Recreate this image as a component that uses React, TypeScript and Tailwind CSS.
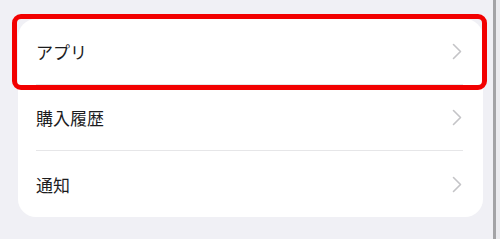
import React from "react";

function Chevron() {
  return (
    <svg width="10" height="17" viewBox="0 0 10 17" fill="none" className="shrink-0">
      <polyline points="1.5,1.5 8.5,8.5 1.5,15.5" stroke="#c4c4c7" strokeWidth="1.6" strokeLinecap="round" strokeLinejoin="round" />
    </svg>
  );
}

function Row({ label, last }: { label: string; last?: boolean }) {
  return (
    <div className="h-[66px] pl-[18px] flex flex-col">
      <div className="flex-1 flex items-center pr-[21px]">
        <span className="flex-1 text-[17px] text-[#1c1c1e] leading-none">{label}</span>
        <Chevron />
      </div>
      {!last && <div className="h-px bg-[#e6e6e8] mr-[20px]" />}
    </div>
  );
}

export default function App() {
  return (
    <div
      className="relative w-[500px] h-[239px] flex bg-[#f0f0f5] overflow-hidden"
      style={{ fontFamily: '"Noto Sans CJK JP", "Noto Sans", sans-serif' }}
    >
      <div className="flex-1 pl-[18px] pr-[10px] pt-[19px]">
        <div className="bg-white rounded-[18px] flex flex-col">
          <Row label="アプリ" />
          <Row label="購入履歴" />
          <Row label="通知" last />
        </div>
      </div>
      <div className="w-[3px] bg-[#a3a3a6]" />
      <div className="w-[4px] bg-[#ebebef]" />
      <div className="absolute left-[12px] top-[14px] w-[475px] h-[76px] border-[5px] border-[#f20000] rounded-[9px]" />
    </div>
  );
}
